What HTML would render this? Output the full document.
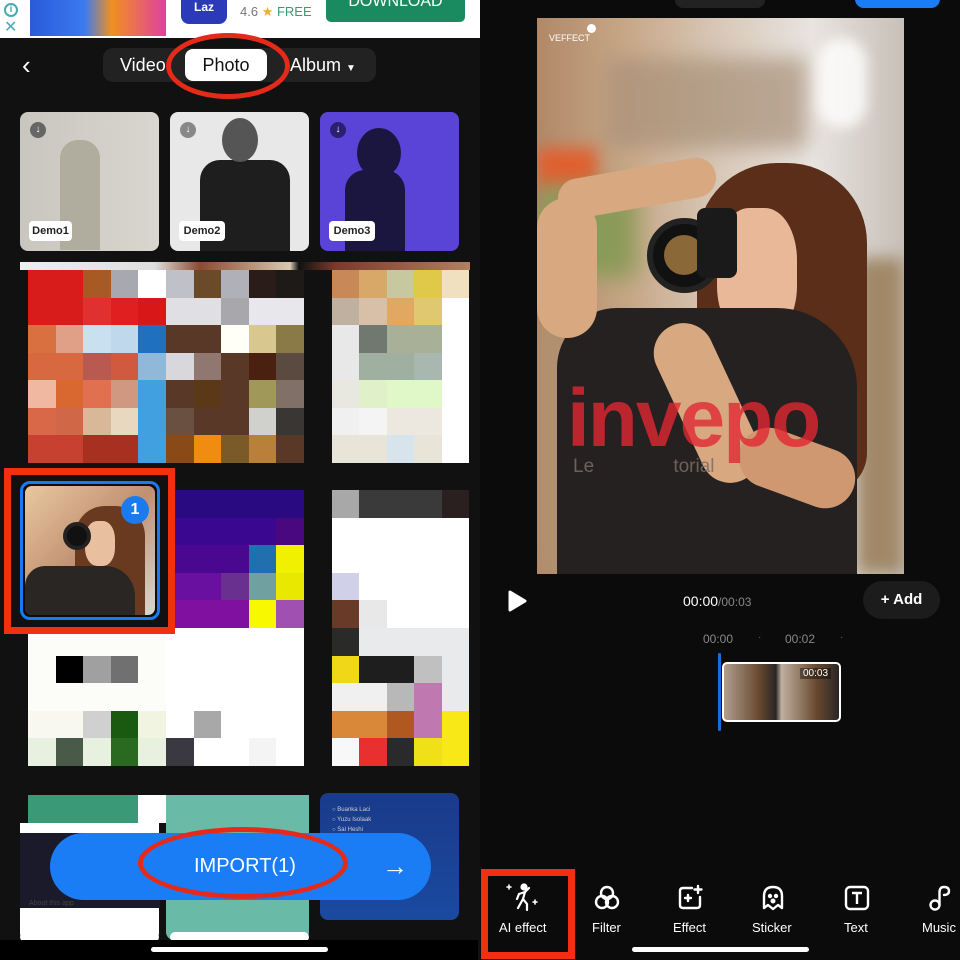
<!DOCTYPE html>
<html><head><meta charset="utf-8">
<style>
*{margin:0;padding:0;box-sizing:border-box}
body{width:960px;height:960px;background:#0d0d0d;font-family:"Liberation Sans",sans-serif;position:relative;overflow:hidden;color:#fff}
.a{position:absolute}
.g{position:absolute;display:grid}
.g i{display:block}
</style></head><body>
<div class="a" style="left:0;top:0;width:480px;height:960px;background:#111"></div>
<div class="a" style="left:0;top:0;width:480px;height:38px;background:#fff"></div>
<div class="a" style="left:4px;top:3px;width:14px;height:14px;border:2px solid #4aa8b0;border-radius:50%;color:#4aa8b0;font-size:10px;text-align:center;line-height:10px;font-weight:bold">i</div>
<div class="a" style="left:4px;top:17px;color:#4aa8b0;font-size:16px">✕</div>
<div class="a" style="left:30px;top:0;width:136px;height:36px;background:linear-gradient(90deg,#2a5ad8,#3a7af0 40%,#f09020 60%,#e040a0)"></div>
<div class="a" style="left:181px;top:0;width:46px;height:24px;background:#2a3ab8;border-radius:0 0 8px 8px;color:#fff;font-size:12px;text-align:center;font-weight:bold">Laz</div>
<div class="a" style="left:240px;top:4px;font-size:13px;color:#777">4.6 <span style="color:#f0b020">★</span> <span style="color:#3a9a70">FREE</span></div>
<div class="a" style="left:326px;top:0;width:139px;height:22px;background:#1a8a60;border-radius:0 0 5px 5px;color:#fff;font-size:16px;text-align:center;line-height:4px">DOWNLOAD</div>
<div class="a" style="left:22px;top:52px;font-size:26px;line-height:26px;color:#fff">‹</div>
<div class="a" style="left:103px;top:48px;width:273px;height:34px;background:#222;border-radius:10px"></div>
<div class="a" style="left:120px;top:55px;font-size:18px;color:#fff">Video</div>
<div class="a" style="left:185px;top:49px;width:82px;height:32px;background:#fff;border-radius:8px;color:#111;font-size:18px;text-align:center;line-height:32px">Photo</div>
<div class="a" style="left:290px;top:55px;font-size:18px;color:#fff">Album <span style="font-size:10px">▼</span></div>
<div class="a" style="left:166px;top:33px;width:124px;height:66px;border:5px solid #e52a1a;border-radius:50%"></div>
<div class="a" style="left:20px;top:112px;width:139px;height:139px;border-radius:8px;background:linear-gradient(90deg,#c8c6be,#d8d6ce)"></div>
<div class="a" style="left:60px;top:140px;width:40px;height:110px;background:#b0ac9e;border-radius:18px 18px 0 0"></div>
<div class="a" style="left:170px;top:112px;width:139px;height:139px;border-radius:8px;background:#e8e8e8"></div>
<div class="a" style="left:200px;top:160px;width:90px;height:91px;background:#1e1e1e;border-radius:20px 20px 0 0"></div>
<div class="a" style="left:222px;top:118px;width:36px;height:44px;background:#555;border-radius:50%"></div>
<div class="a" style="left:320px;top:112px;width:139px;height:139px;border-radius:8px;background:#5a44d8"></div>
<div class="a" style="left:345px;top:170px;width:60px;height:81px;background:#1a1640;border-radius:20px 20px 0 0"></div>
<div class="a" style="left:357px;top:128px;width:44px;height:50px;background:#1a1640;border-radius:50%"></div>
<div class="a" style="left:30px;top:122px;width:16px;height:16px;border-radius:50%;background:#666;font-size:10px;text-align:center;line-height:16px">↓</div>
<div class="a" style="left:180px;top:122px;width:16px;height:16px;border-radius:50%;background:#888;font-size:10px;text-align:center;line-height:16px">↓</div>
<div class="a" style="left:330px;top:122px;width:16px;height:16px;border-radius:50%;background:#2a2070;font-size:10px;text-align:center;line-height:16px">↓</div>
<div class="a" style="left:29px;top:221px;width:43px;height:20px;background:#fff;border-radius:4px;color:#222;font-size:11px;font-weight:bold;text-align:center;line-height:20px">Demo1</div>
<div class="a" style="left:179px;top:221px;width:46px;height:20px;background:#fff;border-radius:4px;color:#222;font-size:11px;font-weight:bold;text-align:center;line-height:20px">Demo2</div>
<div class="a" style="left:329px;top:221px;width:46px;height:20px;background:#fff;border-radius:4px;color:#222;font-size:11px;font-weight:bold;text-align:center;line-height:20px">Demo3</div>
<div class="a" style="left:20px;top:262px;width:450px;height:8px;background:linear-gradient(90deg,#eee,#ddd 30%,#8a4a30 40%,#d8c8b0 60%,#111 62%,#7a3a2a 70%,#b08060)"></div>
<div class="g" style="left:28px;top:270px;width:276px;height:193px;grid-template-columns:repeat(10,1fr);grid-template-rows:repeat(7,1fr)">
<i style="background:#d81c1c"></i><i style="background:#d81c1c"></i><i style="background:#a85a25"></i><i style="background:#a8a8b0"></i><i style="background:#fff"></i><i style="background:#c0c0c8"></i><i style="background:#6b4a2a"></i><i style="background:#b0b0b8"></i><i style="background:#2a1c18"></i><i style="background:#1e1a18"></i>
<i style="background:#d81c1c"></i><i style="background:#d81c1c"></i><i style="background:#e03030"></i><i style="background:#e02020"></i><i style="background:#d81818"></i><i style="background:#e0e0e4"></i><i style="background:#e0e0e4"></i><i style="background:#a8a8ac"></i><i style="background:#e8e8ec"></i><i style="background:#e8e8ec"></i>
<i style="background:#d87040"></i><i style="background:#e0a088"></i><i style="background:#c8e0f0"></i><i style="background:#c0d8ec"></i><i style="background:#2070c0"></i><i style="background:#5a3828"></i><i style="background:#5a3828"></i><i style="background:#fffff8"></i><i style="background:#d8c890"></i><i style="background:#8a7a48"></i>
<i style="background:#d86840"></i><i style="background:#d86840"></i><i style="background:#b85a50"></i><i style="background:#d05a40"></i><i style="background:#90b8d8"></i><i style="background:#d8d8dc"></i><i style="background:#907870"></i><i style="background:#5a3828"></i><i style="background:#4a2010"></i><i style="background:#5a4a40"></i>
<i style="background:#f0b8a0"></i><i style="background:#d86830"></i><i style="background:#e07050"></i><i style="background:#d09880"></i><i style="background:#40a0e0"></i><i style="background:#5a3828"></i><i style="background:#5a3818"></i><i style="background:#5a3828"></i><i style="background:#a09858"></i><i style="background:#807068"></i>
<i style="background:#d86848"></i><i style="background:#d06848"></i><i style="background:#d8b898"></i><i style="background:#e8d8c0"></i><i style="background:#40a0e0"></i><i style="background:#6a5040"></i><i style="background:#5a3828"></i><i style="background:#5a3828"></i><i style="background:#d0d0cc"></i><i style="background:#3a3634"></i>
<i style="background:#c84030"></i><i style="background:#c84030"></i><i style="background:#a83020"></i><i style="background:#a83020"></i><i style="background:#40a0e0"></i><i style="background:#8a4a18"></i><i style="background:#f08c10"></i><i style="background:#7a5a28"></i><i style="background:#b88038"></i><i style="background:#5a3828"></i>
</div>
<div class="g" style="left:332px;top:270px;width:137px;height:193px;grid-template-columns:repeat(5,1fr);grid-template-rows:repeat(7,1fr)">
<i style="background:#c88858"></i><i style="background:#d8a868"></i><i style="background:#c8c8a0"></i><i style="background:#e0c848"></i><i style="background:#f0e0c0"></i>
<i style="background:#c0b0a0"></i><i style="background:#d8c0a8"></i><i style="background:#e0a860"></i><i style="background:#e0c870"></i><i style="background:#fff"></i>
<i style="background:#e8e8e8"></i><i style="background:#707870"></i><i style="background:#a8b098"></i><i style="background:#a8b098"></i><i style="background:#fff"></i>
<i style="background:#e8e8e8"></i><i style="background:#a0b0a0"></i><i style="background:#a0b0a0"></i><i style="background:#a8b8b0"></i><i style="background:#fff"></i>
<i style="background:#e8e8e0"></i><i style="background:#e0f0c8"></i><i style="background:#e0f8c8"></i><i style="background:#e0f8c8"></i><i style="background:#fff"></i>
<i style="background:#f0f0f0"></i><i style="background:#f4f4f4"></i><i style="background:#ece8e0"></i><i style="background:#ece8e0"></i><i style="background:#fff"></i>
<i style="background:#e8e4d8"></i><i style="background:#e8e4d8"></i><i style="background:#d8e4ec"></i><i style="background:#e8e4d8"></i><i style="background:#fff"></i>
</div>
<div class="g" style="left:28px;top:490px;width:276px;height:276px;grid-template-columns:repeat(10,1fr);grid-template-rows:repeat(10,1fr)">
<i></i><i></i><i></i><i></i><i></i><i style="background:#2a0a80"></i><i style="background:#2a0a80"></i><i style="background:#2a0a80"></i><i style="background:#2a0a80"></i><i style="background:#2a0a80"></i>
<i></i><i></i><i></i><i></i><i></i><i style="background:#3a0890"></i><i style="background:#3a0890"></i><i style="background:#3a0890"></i><i style="background:#3a0890"></i><i style="background:#4a0880"></i>
<i></i><i></i><i></i><i></i><i></i><i style="background:#4a0890"></i><i style="background:#4a0890"></i><i style="background:#4a0890"></i><i style="background:#2070b0"></i><i style="background:#f0f000"></i>
<i></i><i></i><i></i><i></i><i></i><i style="background:#6a10a0"></i><i style="background:#6a10a0"></i><i style="background:#6a3090"></i><i style="background:#70a0a0"></i><i style="background:#e8e800"></i>
<i></i><i></i><i></i><i></i><i></i><i style="background:#8010a0"></i><i style="background:#8010a0"></i><i style="background:#8010a0"></i><i style="background:#f8f800"></i><i style="background:#a050b0"></i>
<i style="background:#fcfcf8"></i><i style="background:#fcfcf8"></i><i style="background:#fcfcf8"></i><i style="background:#fcfcf8"></i><i style="background:#fcfcf8"></i><i style="background:#fff"></i><i style="background:#fff"></i><i style="background:#fff"></i><i style="background:#fff"></i><i style="background:#fff"></i>
<i style="background:#fcfcf8"></i><i style="background:#000"></i><i style="background:#a0a0a0"></i><i style="background:#707070"></i><i style="background:#fcfcf8"></i><i style="background:#fff"></i><i style="background:#fff"></i><i style="background:#fff"></i><i style="background:#fff"></i><i style="background:#fff"></i>
<i style="background:#fcfcf8"></i><i style="background:#fcfcf8"></i><i style="background:#fcfcf8"></i><i style="background:#fcfcf8"></i><i style="background:#fcfcf8"></i><i style="background:#fff"></i><i style="background:#fff"></i><i style="background:#fff"></i><i style="background:#fff"></i><i style="background:#fff"></i>
<i style="background:#f8f8f0"></i><i style="background:#f8f8f0"></i><i style="background:#d0d0d0"></i><i style="background:#1a5a10"></i><i style="background:#f0f4e0"></i><i style="background:#fff"></i><i style="background:#a8a8a8"></i><i style="background:#fff"></i><i style="background:#fff"></i><i style="background:#fff"></i>
<i style="background:#e8f0e0"></i><i style="background:#4a5a48"></i><i style="background:#e8f0e0"></i><i style="background:#2a6a20"></i><i style="background:#e8f0e0"></i><i style="background:#3a3840"></i><i style="background:#fff"></i><i style="background:#fff"></i><i style="background:#f4f4f4"></i><i style="background:#fff"></i>
</div>
<div class="g" style="left:332px;top:490px;width:137px;height:276px;grid-template-columns:repeat(5,1fr);grid-template-rows:repeat(10,1fr)">
<i style="background:#a8a8a8"></i><i style="background:#3a3a3a"></i><i style="background:#3a3a3a"></i><i style="background:#3a3a3a"></i><i style="background:#2a2020"></i>
<i style="background:#fff"></i><i style="background:#fff"></i><i style="background:#fff"></i><i style="background:#fff"></i><i style="background:#fff"></i>
<i style="background:#fff"></i><i style="background:#fff"></i><i style="background:#fff"></i><i style="background:#fff"></i><i style="background:#fff"></i>
<i style="background:#d0d0e8"></i><i style="background:#fff"></i><i style="background:#fff"></i><i style="background:#fff"></i><i style="background:#fff"></i>
<i style="background:#6a3a28"></i><i style="background:#e8e8e8"></i><i style="background:#fff"></i><i style="background:#fff"></i><i style="background:#fff"></i>
<i style="background:#2a2a28"></i><i style="background:#e8eaec"></i><i style="background:#e8eaec"></i><i style="background:#e8eaec"></i><i style="background:#e8eaec"></i>
<i style="background:#f0d818"></i><i style="background:#1e1e1e"></i><i style="background:#1e1e1e"></i><i style="background:#c0c0c0"></i><i style="background:#e8eaec"></i>
<i style="background:#f0f0f0"></i><i style="background:#f0f0f0"></i><i style="background:#b8b8b8"></i><i style="background:#c078b0"></i><i style="background:#e8eaec"></i>
<i style="background:#d88838"></i><i style="background:#d88838"></i><i style="background:#b05820"></i><i style="background:#c078b0"></i><i style="background:#f8e818"></i>
<i style="background:#f8f8f8"></i><i style="background:#e83030"></i><i style="background:#2a2a2a"></i><i style="background:#f0e018"></i><i style="background:#f8e818"></i>
</div>
<div class="a" style="left:4px;top:468px;width:171px;height:166px;border:7px solid #f0300e;background:#111"></div>
<div class="a" style="left:20px;top:481px;width:140px;height:139px;border:3px solid #1a7af0;border-radius:10px;background:#0d0d0d"></div>
<div class="a" style="left:25px;top:486px;width:130px;height:129px;border-radius:7px;overflow:hidden;background:linear-gradient(135deg,#e8c8a0,#c09070 50%,#d8d8d0)">
 <div class="a" style="left:50px;top:20px;width:70px;height:109px;background:#6a3a20;border-radius:30px 30px 0 0"></div>
 <div class="a" style="left:60px;top:35px;width:30px;height:45px;background:#e8c0a0;border-radius:40%"></div>
 <div class="a" style="left:0;top:80px;width:110px;height:50px;background:#2a2624;border-radius:20px 30px 0 0"></div>
 <div class="a" style="left:38px;top:36px;width:28px;height:28px;border-radius:50%;background:#111;border:4px solid #222"></div>
 <div class="a" style="left:96px;top:10px;width:28px;height:28px;border-radius:50%;background:#1a7af0;color:#fff;font-weight:bold;font-size:16px;text-align:center;line-height:28px">1</div>
</div>
<div class="a" style="left:28px;top:795px;width:110px;height:28px;background:#3a9a78"></div>
<div class="a" style="left:138px;top:795px;width:28px;height:28px;background:#fff"></div>
<div class="a" style="left:166px;top:795px;width:143px;height:145px;background:#6abaa8;border-radius:0 0 8px 8px"></div>
<div class="a" style="left:20px;top:823px;width:139px;height:118px;background:#fff;border-radius:0 0 8px 8px"></div>
<div class="a" style="left:20px;top:833px;width:140px;height:75px;background:#1a1a2a"></div>
<div class="a" style="left:29px;top:900px;font-size:7px;color:#444">About this app</div>
<div class="a" style="left:320px;top:793px;width:139px;height:127px;background:linear-gradient(180deg,#1a3a8a,#1a4aa0);border-radius:8px"></div>
<div class="a" style="left:332px;top:805px;font-size:6px;color:#ccc;line-height:10px">○ Buanka Laci<br>○ Yuzu Isolaak<br>○ Sal Heshi</div>
<div class="a" style="left:20px;top:932px;width:139px;height:10px;background:#fff;border-radius:6px"></div>
<div class="a" style="left:170px;top:932px;width:139px;height:10px;background:#fff;border-radius:6px"></div>
<div class="a" style="left:50px;top:833px;width:381px;height:67px;background:#1a7df5;border-radius:34px"></div>
<div class="a" style="left:194px;top:855px;font-size:20px;color:#fff">IMPORT(1)</div>
<div class="a" style="left:382px;top:851px;font-size:26px;color:#fff">→</div>
<div class="a" style="left:138px;top:827px;width:210px;height:72px;border:5px solid #e52a1a;border-radius:50%"></div>
<div class="a" style="left:0;top:940px;width:478px;height:20px;background:#000"></div>
<div class="a" style="left:151px;top:947px;width:177px;height:5px;background:#fff;border-radius:3px"></div>

<div class="a" style="left:480px;top:0;width:480px;height:960px;background:#0b0b0b"></div>
<div class="a" style="left:675px;top:-8px;width:90px;height:16px;background:#222;border-radius:8px"></div>
<div class="a" style="left:855px;top:-10px;width:85px;height:18px;background:#1a7df5;border-radius:9px"></div>
<div class="a" style="left:537px;top:18px;width:367px;height:556px;overflow:hidden;background:linear-gradient(90deg,#b08868 0%,#c8a888 25%,#d8c8b8 50%,#e8e4e0 75%,#c8c0b8 100%)">
 <div class="a" style="left:70px;top:40px;width:200px;height:90px;background:#a89078;opacity:.7;filter:blur(10px)"></div>
 <div class="a" style="left:280px;top:20px;width:50px;height:90px;background:#fff;opacity:.8;border-radius:25px;filter:blur(6px)"></div>
 <div class="a" style="left:0;top:130px;width:60px;height:40px;background:#e06030;filter:blur(8px)"></div>
 <div class="a" style="left:0;top:170px;width:100px;height:90px;background:#8a9a58;filter:blur(12px)"></div>
 <div class="a" style="left:320px;top:240px;width:47px;height:316px;background:#a08868;filter:blur(8px)"></div>
 <div class="a" style="left:0;top:300px;width:100px;height:256px;background:#b09070;filter:blur(10px)"></div>
 <div class="a" style="left:160px;top:145px;width:170px;height:330px;background:#5a2e18;border-radius:80px 80px 40px 40px"></div>
 <div class="a" style="left:180px;top:190px;width:80px;height:130px;background:#e8b898;border-radius:40%"></div>
 <div class="a" style="left:20px;top:290px;width:300px;height:280px;background:#242120;border-radius:60px 80px 0 0"></div>
 <div class="a" style="left:0;top:180px;width:60px;height:140px;background:#d8a880;border-radius:30px"></div>
 <div class="a" style="left:20px;top:150px;width:160px;height:40px;background:#d8a880;border-radius:20px;transform:rotate(-10deg)"></div>
 <div class="a" style="left:140px;top:300px;width:60px;height:170px;background:#d8a880;border-radius:30px;transform:rotate(-25deg)"></div>
 <div class="a" style="left:200px;top:420px;width:120px;height:60px;background:#d09870;border-radius:30px;transform:rotate(20deg)"></div>
 <div class="a" style="left:110px;top:200px;width:75px;height:75px;border-radius:50%;background:#111;border:6px solid #222"></div>
 <div class="a" style="left:127px;top:217px;width:40px;height:40px;border-radius:50%;background:#8a6838"></div>
 <div class="a" style="left:160px;top:190px;width:40px;height:70px;background:#1a1a1a;border-radius:8px"></div>
 <div class="a" style="left:12px;top:15px;font-size:9px;color:#fff">VEFFECT</div>
 <div class="a" style="left:50px;top:6px;width:9px;height:9px;border-radius:50%;background:#fff"></div>
 <div class="a" style="left:30px;top:360px;font-size:82px;font-weight:bold;color:rgba(225,40,50,.8);letter-spacing:-2px;line-height:82px">invepo</div>
 <div class="a" style="left:36px;top:438px;font-size:19px;color:rgba(120,110,100,.85)">Le&nbsp;&nbsp;&nbsp;&nbsp;&nbsp;&nbsp;&nbsp;&nbsp;&nbsp;&nbsp;&nbsp;&nbsp;&nbsp;&nbsp;&nbsp;torial</div>
</div>
<svg class="a" style="left:507px;top:590px" width="20" height="22" viewBox="0 0 20 22"><path d="M3 2 L18 11 L3 20 Z" fill="#fff" stroke="#fff" stroke-width="3" stroke-linejoin="round"/></svg>
<div class="a" style="left:683px;top:593px;font-size:14px;color:#fff">00:00<span style="color:#888;font-size:12px">/00:03</span></div>
<div class="a" style="left:863px;top:581px;width:77px;height:38px;background:#1c1c1c;border-radius:19px;font-size:15px;font-weight:bold;text-align:center;line-height:38px">+ Add</div>
<div class="a" style="left:703px;top:632px;font-size:12px;color:#888">00:00</div>
<div class="a" style="left:758px;top:632px;font-size:10px;color:#666">·</div>
<div class="a" style="left:785px;top:632px;font-size:12px;color:#888">00:02</div>
<div class="a" style="left:840px;top:632px;font-size:10px;color:#666">·</div>
<div class="a" style="left:718px;top:653px;width:3px;height:78px;background:#1a6ae0;border-radius:2px"></div>
<div class="a" style="left:722px;top:662px;width:119px;height:60px;border:2px solid #fff;border-radius:5px;background:linear-gradient(90deg,#b0a090,#6a4a30 30%,#2a2624 45%,#c0b0a0 50%,#6a4a30 80%,#2a2624)"></div>
<div class="a" style="left:800px;top:668px;font-size:10px;color:#fff;background:rgba(0,0,0,.4);padding:0 3px">00:03</div>
<div class="a" style="left:481px;top:869px;width:94px;height:90px;border:7px solid #f0300e"></div>
<svg class="a" style="left:505px;top:882px" width="36" height="30" viewBox="0 0 36 30" fill="none" stroke="#fff" stroke-width="2.2" stroke-linecap="round" stroke-linejoin="round"><circle cx="19" cy="5" r="2.5" fill="#fff"/><path d="M14 12 L20 10 L24 6 M20 10 L18 17 L22 22 L22 28 M18 17 L13 26 M14 12 L12 17"/><path d="M4 3 v4 M2 5 h4 M30 18 v4 M28 20 h4" stroke-width="1.6"/></svg>
<svg class="a" style="left:593px;top:884px" width="28" height="28" viewBox="0 0 28 28" fill="none" stroke="#fff" stroke-width="2.4"><circle cx="14" cy="9" r="6"/><circle cx="9" cy="18" r="6"/><circle cx="19" cy="18" r="6"/></svg>
<svg class="a" style="left:676px;top:884px" width="28" height="28" viewBox="0 0 28 28" fill="none" stroke="#fff" stroke-width="2.4" stroke-linecap="round"><path d="M16 4 H7 Q4 4 4 7 V21 Q4 24 7 24 H21 Q24 24 24 21 V13"/><path d="M22 2 v7 M18.5 5.5 h7 M12 11 v6 M9 14 h6"/></svg>
<svg class="a" style="left:759px;top:884px" width="28" height="28" viewBox="0 0 28 28" fill="none" stroke="#fff" stroke-width="2.4" stroke-linejoin="round"><path d="M5 24 V12 Q5 3 14 3 Q23 3 23 12 V24 L19 21 L14 25 L9 21 Z"/><circle cx="11" cy="12" r="1" fill="#fff"/><circle cx="17" cy="12" r="1" fill="#fff"/><circle cx="14" cy="17" r="1.3" fill="#fff"/></svg>
<svg class="a" style="left:843px;top:884px" width="28" height="28" viewBox="0 0 28 28" fill="none" stroke="#fff" stroke-width="2.4"><rect x="3" y="3" width="22" height="22" rx="4"/><path d="M9 9 H19 M14 9 V20"/></svg>
<svg class="a" style="left:927px;top:884px" width="26" height="28" viewBox="0 0 26 28" fill="none" stroke="#fff" stroke-width="2.4" stroke-linecap="round"><circle cx="8" cy="21" r="4.5"/><path d="M12.5 21 V8 Q12.5 3 17 3 Q22 3 22 7 Q22 11 17 11"/></svg>
<div class="a" style="left:499px;top:920px;font-size:13px;color:#fff">AI effect</div>
<div class="a" style="left:592px;top:920px;font-size:13px;color:#fff">Filter</div>
<div class="a" style="left:673px;top:920px;font-size:13px;color:#fff">Effect</div>
<div class="a" style="left:752px;top:920px;font-size:13px;color:#fff">Sticker</div>
<div class="a" style="left:844px;top:920px;font-size:13px;color:#fff">Text</div>
<div class="a" style="left:922px;top:920px;font-size:13px;color:#fff">Music</div>
<div class="a" style="left:632px;top:947px;width:177px;height:5px;background:#fff;border-radius:3px"></div>
</body></html>
